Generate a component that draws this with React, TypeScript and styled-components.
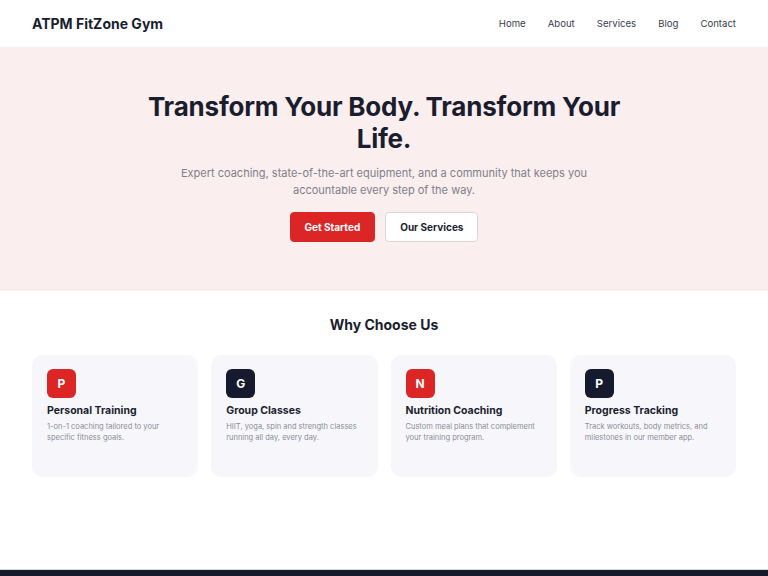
import * as React from 'react';
import styled, { createGlobalStyle } from 'styled-components';

const GlobalStyle = createGlobalStyle`
  * { box-sizing: border-box; }
  body {
    margin: 0;
    font-family: Inter, "Noto Sans", "Liberation Sans", sans-serif;
    color: #1a1d2e;
    background: #fff;
  }
`;

const Header = styled.header`
  height: 47px;
  display: flex;
  align-items: center;
  justify-content: space-between;
  padding: 0 32px;
  background: #fff;
`;

const Logo = styled.div`
  font-size: 14px;
  font-weight: 700;
  color: #1a1d2e;
`;

const Nav = styled.nav`
  display: flex;
  gap: 22px;
`;

const NavLink = styled.a`
  font-size: 9.6px;
  color: #3a3d4d;
  text-decoration: none;
`;

const Hero = styled.section`
  background: #fbeeee;
  height: 244px;
  display: flex;
  flex-direction: column;
  align-items: center;
  padding-top: 44px;
  text-align: center;
`;

const Title = styled.h1`
  margin: 0;
  max-width: 520px;
  font-size: 26px;
  line-height: 32px;
  font-weight: 700;
  color: #1a1d2e;
  letter-spacing: -0.2px;
`;

const Lead = styled.p`
  margin: 10px 0 0;
  max-width: 410px;
  font-size: 11px;
  line-height: 17px;
  color: #7d7f8c;
`;

const Actions = styled.div`
  display: flex;
  gap: 10px;
  margin-top: 13px;
`;

const Button = styled.button<{ $primary?: boolean }>`
  height: 30px;
  padding: 0 14px;
  border-radius: 4px;
  font-family: inherit;
  font-size: 10px;
  font-weight: 700;
  cursor: pointer;
  border: 1px solid ${(p) => (p.$primary ? '#dc2626' : '#dcd6da')};
  background: ${(p) => (p.$primary ? '#dc2626' : '#fff')};
  color: ${(p) => (p.$primary ? '#fff' : '#1a1d2e')};
`;

const Features = styled.section`
  padding: 24px 32px 0;
  height: 278px;
`;

const SectionTitle = styled.h2`
  margin: 0;
  text-align: center;
  font-size: 14px;
  font-weight: 700;
  line-height: 20px;
  color: #1a1d2e;
`;

const Grid = styled.div`
  display: grid;
  grid-template-columns: repeat(4, 1fr);
  gap: 13px;
  margin-top: 20px;
`;

const Card = styled.div`
  height: 122px;
  background: #f7f7fb;
  border-radius: 10px;
  padding: 14px 15px;
`;

const Badge = styled.div<{ $dark?: boolean }>`
  width: 29px;
  height: 29px;
  border-radius: 6px;
  display: flex;
  align-items: center;
  justify-content: center;
  background: ${(p) => (p.$dark ? '#161a2e' : '#dc2626')};
  color: #fff;
  font-size: 12px;
  font-weight: 700;
`;

const CardTitle = styled.h3`
  margin: 6px 0 0;
  font-size: 10.5px;
  line-height: 14px;
  font-weight: 700;
  color: #1a1d2e;
`;

const CardText = styled.p`
  margin: 3px 0 0;
  font-size: 7.5px;
  line-height: 11px;
  color: #8a8c98;
`;

const Footer = styled.footer`
  height: 40px;
  background: #171a2b;
  border-top: 1px solid #d8d8de;
`;

const features = [
  { letter: 'P', title: 'Personal Training', text: '1-on-1 coaching tailored to your specific fitness goals.', dark: false },
  { letter: 'G', title: 'Group Classes', text: 'HIIT, yoga, spin and strength classes running all day, every day.', dark: true },
  { letter: 'N', title: 'Nutrition Coaching', text: 'Custom meal plans that complement your training program.', dark: false },
  { letter: 'P', title: 'Progress Tracking', text: 'Track workouts, body metrics, and milestones in our member app.', dark: true },
];

export default function App() {
  return (
    <>
      <GlobalStyle />
      <Header>
        <Logo>ATPM FitZone Gym</Logo>
        <Nav>
          <NavLink href="#">Home</NavLink>
          <NavLink href="#">About</NavLink>
          <NavLink href="#">Services</NavLink>
          <NavLink href="#">Blog</NavLink>
          <NavLink href="#">Contact</NavLink>
        </Nav>
      </Header>
      <Hero>
        <Title>Transform Your Body. Transform Your Life.</Title>
        <Lead>Expert coaching, state-of-the-art equipment, and a community that keeps you accountable every step of the way.</Lead>
        <Actions>
          <Button $primary>Get Started</Button>
          <Button>Our Services</Button>
        </Actions>
      </Hero>
      <Features>
        <SectionTitle>Why Choose Us</SectionTitle>
        <Grid>
          {features.map((f) => (
            <Card key={f.title}>
              <Badge $dark={f.dark}>{f.letter}</Badge>
              <CardTitle>{f.title}</CardTitle>
              <CardText>{f.text}</CardText>
            </Card>
          ))}
        </Grid>
      </Features>
      <Footer />
    </>
  );
}
